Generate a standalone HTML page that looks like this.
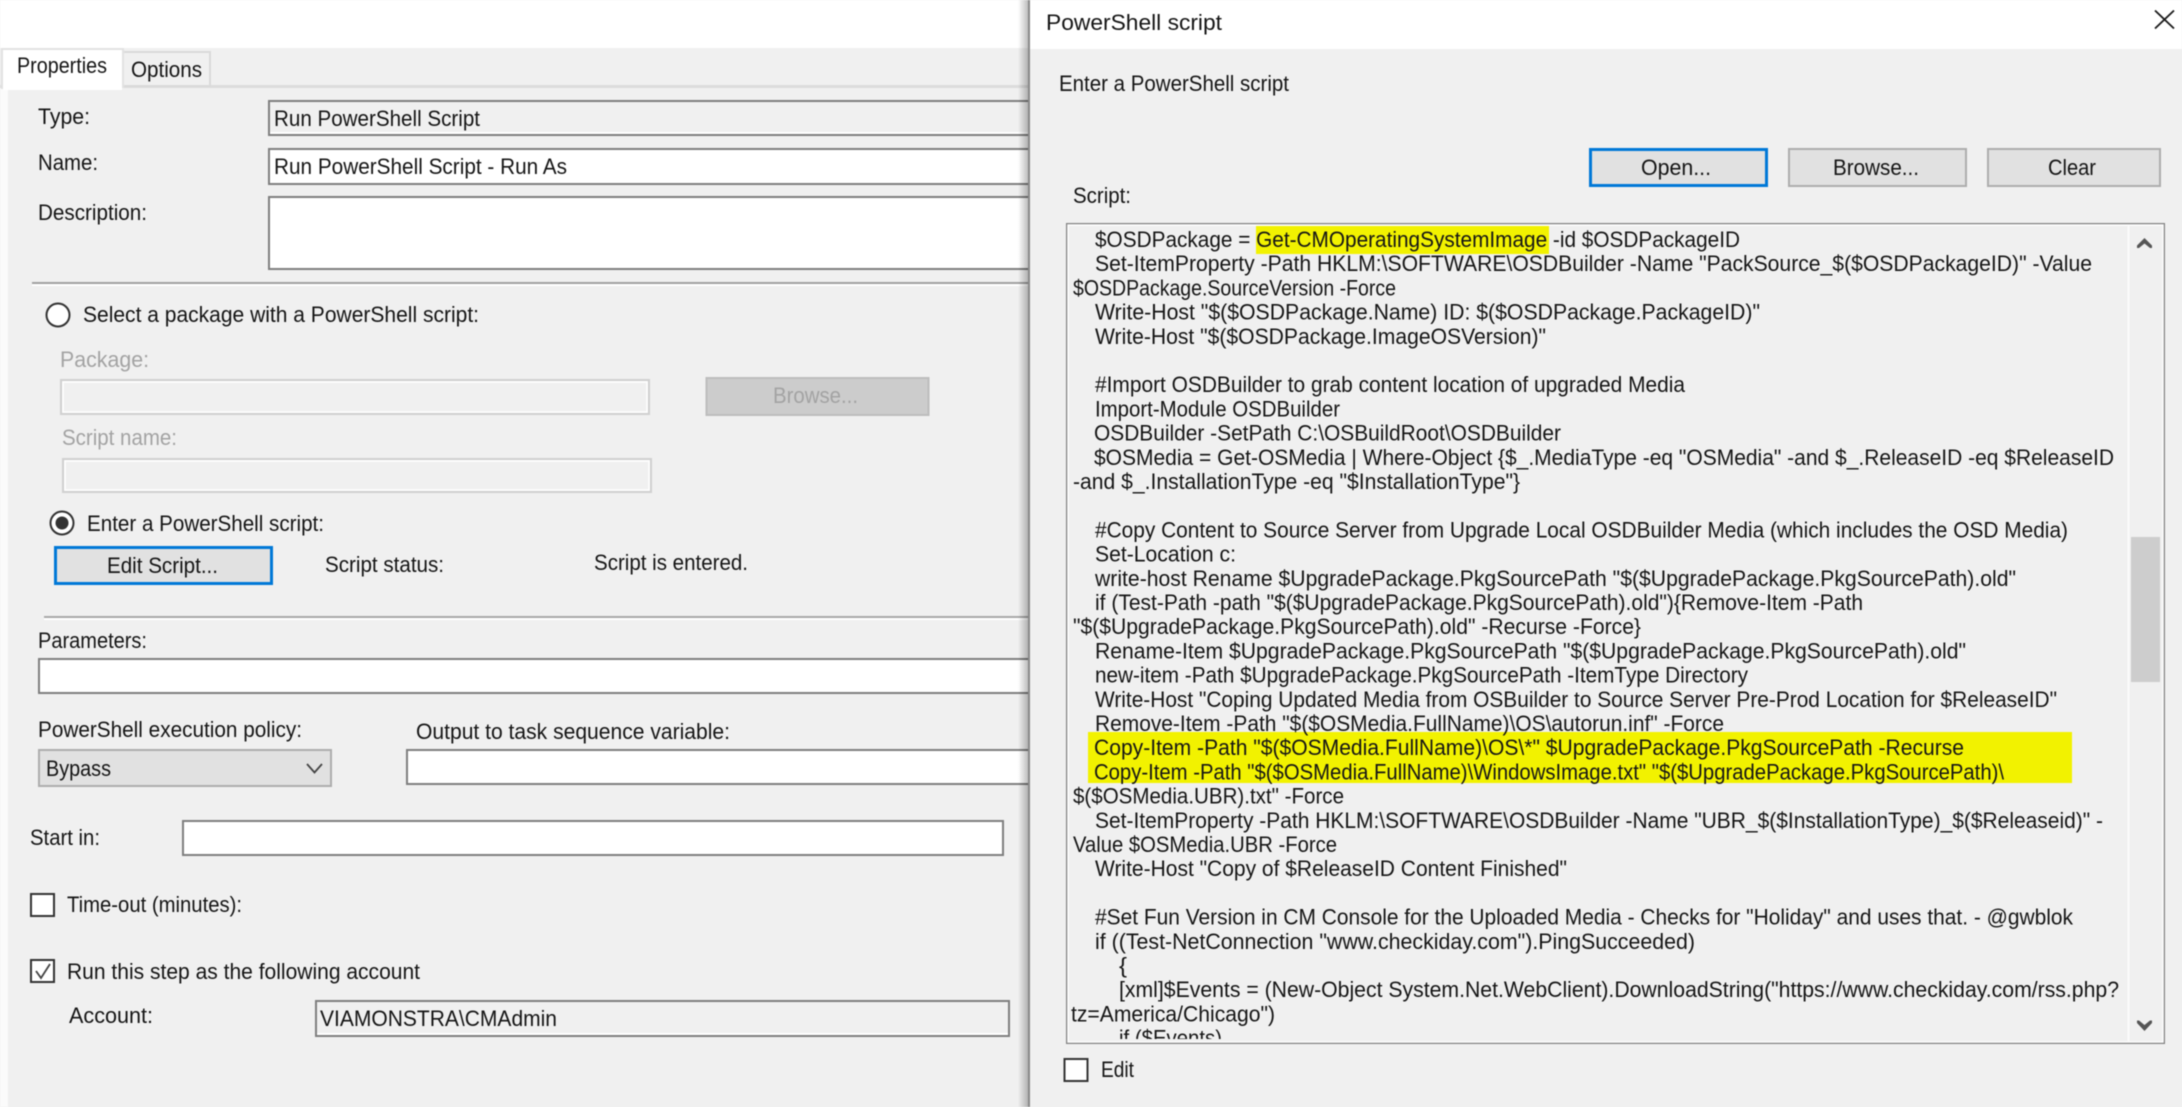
<!DOCTYPE html>
<html><head><meta charset="utf-8"><style>
html,body{margin:0;padding:0;background:#f0f0f0;overflow:hidden}
svg{display:block;width:2182px;height:1107px;filter:blur(.5px)}
text{font-family:"Liberation Sans",sans-serif;font-size:22px;fill:#151515;white-space:pre}
.d{fill:#a3a3a3}
</style></head><body>
<svg xmlns="http://www.w3.org/2000/svg" width="2182" height="1107" viewBox="0 0 2182 1107">
<defs>
<clipPath id="bx"><rect x="1069" y="226" width="1059" height="813"/></clipPath>
<linearGradient id="sh" x1="0" x2="1" y1="0" y2="0"><stop offset="0" stop-color="#000" stop-opacity="0"/><stop offset="1" stop-color="#000" stop-opacity=".28"/></linearGradient>
</defs>
<rect width="2182" height="1107" fill="#f0f0f0"/>
<!-- left window -->
<rect x="0" y="0" width="1030" height="48" fill="#fff"/>
<rect x="0" y="88" width="8" height="1019" fill="#fbfbfb"/>
<rect x="0" y="85" width="1030" height="3" fill="#dcdcdc"/>
<rect x="123" y="52" width="87" height="34" fill="#f0f0f0" stroke="#dadada" stroke-width="2"/>
<path d="M2 89V49H123V88" fill="#fff" stroke="#e2e2e2" stroke-width="2"/>
<rect x="3" y="50" width="119" height="40" fill="#fff"/>
<text x="17" y="73" textLength="90" lengthAdjust="spacingAndGlyphs">Properties</text>
<text x="131" y="77" textLength="71" lengthAdjust="spacingAndGlyphs">Options</text>

<text x="38" y="124" textLength="52" lengthAdjust="spacingAndGlyphs">Type:</text>
<rect x="269" y="101" width="770" height="34" fill="#f0f0f0" stroke="#7f7f7f" stroke-width="2"/>
<rect x="270" y="132" width="770" height="2" fill="#fff"/>
<text x="274" y="126" textLength="206" lengthAdjust="spacingAndGlyphs">Run PowerShell Script</text>
<text x="38" y="170" textLength="60" lengthAdjust="spacingAndGlyphs">Name:</text>
<rect x="269" y="149" width="770" height="35" fill="#fff" stroke="#7f7f7f" stroke-width="2"/>
<text x="274" y="174" textLength="293" lengthAdjust="spacingAndGlyphs">Run PowerShell Script - Run As</text>
<text x="38" y="220" textLength="109" lengthAdjust="spacingAndGlyphs">Description:</text>
<rect x="269" y="197" width="770" height="72" fill="#fff" stroke="#7f7f7f" stroke-width="2"/>
<rect x="32" y="282" width="1000" height="2" fill="#a0a0a0"/><rect x="32" y="284" width="1000" height="2" fill="#fff"/>

<circle cx="58" cy="315" r="11.500" fill="#fff" stroke="#333" stroke-width="2"/>
<text x="83" y="322" textLength="396" lengthAdjust="spacingAndGlyphs">Select a package with a PowerShell script:</text>
<text class="d" x="60" y="367" textLength="89" lengthAdjust="spacingAndGlyphs">Package:</text>
<rect x="61" y="380" width="588" height="34" fill="#f0f0f0" stroke="#d0d0d0" stroke-width="2"/>
<rect x="63" y="382" width="584" height="30" fill="none" stroke="#fff" stroke-width="1.500"/>
<rect x="706.500" y="378" width="222" height="37" fill="#cccccc" stroke="#bdbdbd" stroke-width="2"/>
<text class="d" x="773" y="403" textLength="85" lengthAdjust="spacingAndGlyphs">Browse...</text>
<text class="d" x="62" y="445" textLength="115" lengthAdjust="spacingAndGlyphs">Script name:</text>
<rect x="63" y="459" width="588" height="33" fill="#f0f0f0" stroke="#d0d0d0" stroke-width="2"/>
<rect x="65" y="461" width="584" height="29" fill="none" stroke="#fff" stroke-width="1.500"/>

<circle cx="62" cy="523" r="11.500" fill="#fff" stroke="#333" stroke-width="2"/>
<circle cx="62" cy="523" r="6.500" fill="#333"/>
<text x="87" y="531" textLength="237" lengthAdjust="spacingAndGlyphs">Enter a PowerShell script:</text>
<rect x="55.500" y="547.500" width="216" height="36" fill="#e1e1e1" stroke="#0078d7" stroke-width="3"/>
<text x="107" y="573" textLength="111" lengthAdjust="spacingAndGlyphs">Edit Script...</text>
<text x="325" y="572" textLength="119" lengthAdjust="spacingAndGlyphs">Script status:</text>
<text x="594" y="570" textLength="154" lengthAdjust="spacingAndGlyphs">Script is entered.</text>
<rect x="44" y="616" width="990" height="2" fill="#a8a8a8"/><rect x="44" y="618" width="990" height="2" fill="#fff"/>

<text x="38" y="648" textLength="109" lengthAdjust="spacingAndGlyphs">Parameters:</text>
<rect x="39" y="659" width="1000" height="34" fill="#fff" stroke="#7f7f7f" stroke-width="2"/>
<text x="38" y="737" textLength="264" lengthAdjust="spacingAndGlyphs">PowerShell execution policy:</text>
<text x="416" y="739" textLength="314" lengthAdjust="spacingAndGlyphs">Output to task sequence variable:</text>
<rect x="39" y="750" width="292" height="36" fill="#e1e1e1" stroke="#adadad" stroke-width="2"/>
<text x="46" y="776" textLength="65" lengthAdjust="spacingAndGlyphs">Bypass</text>
<path d="M307 764l7.500 8.500 7.500-8.500" fill="none" stroke="#444" stroke-width="1.800"/>
<rect x="407" y="750" width="630" height="34" fill="#fff" stroke="#7f7f7f" stroke-width="2"/>
<text x="30" y="845" textLength="70" lengthAdjust="spacingAndGlyphs">Start in:</text>
<rect x="183" y="821" width="820" height="34" fill="#fff" stroke="#7f7f7f" stroke-width="2"/>
<rect x="31" y="894" width="23" height="22" fill="#fff" stroke="#333" stroke-width="2"/>
<text x="67" y="912" textLength="175" lengthAdjust="spacingAndGlyphs">Time-out (minutes):</text>
<rect x="31" y="960" width="23" height="22" fill="#fff" stroke="#333" stroke-width="2"/>
<path d="M36 971l5 7 9-14" fill="none" stroke="#444" stroke-width="1.800"/>
<text x="67" y="979" textLength="353" lengthAdjust="spacingAndGlyphs">Run this step as the following account</text>
<text x="69" y="1023" textLength="84" lengthAdjust="spacingAndGlyphs">Account:</text>
<rect x="316" y="1001" width="693" height="35" fill="#f0f0f0" stroke="#7f7f7f" stroke-width="2"/>
<rect x="317" y="1033" width="691" height="2" fill="#fff"/>
<text x="320" y="1026" textLength="237" lengthAdjust="spacingAndGlyphs">VIAMONSTRA\CMAdmin</text>

<!-- right dialog -->
<rect x="1018" y="0" width="11" height="1107" fill="url(#sh)"/>
<rect x="1028" y="0" width="2" height="1107" fill="#8a8a8a"/>
<rect x="1030" y="0" width="1152" height="1107" fill="#f0f0f0"/>
<rect x="1030" y="0" width="1152" height="49" fill="#fff"/>
<text x="1046" y="30" textLength="176" lengthAdjust="spacingAndGlyphs">PowerShell script</text>
<path d="M2155 10.500l19 18M2174 10.500l-19 18" stroke="#1a1a1a" stroke-width="1.800" fill="none"/>
<text x="1059" y="91" textLength="230" lengthAdjust="spacingAndGlyphs">Enter a PowerShell script</text>
<rect x="1590.500" y="149.500" width="176" height="36" fill="#e1e1e1" stroke="#0078d7" stroke-width="3"/>
<text x="1641" y="175" textLength="70" lengthAdjust="spacingAndGlyphs">Open...</text>
<rect x="1789" y="149" width="177" height="37" fill="#e1e1e1" stroke="#adadad" stroke-width="2"/>
<text x="1833" y="175" textLength="86" lengthAdjust="spacingAndGlyphs">Browse...</text>
<rect x="1988" y="149" width="172" height="37" fill="#e1e1e1" stroke="#adadad" stroke-width="2"/>
<text x="2048" y="175" textLength="48" lengthAdjust="spacingAndGlyphs">Clear</text>
<text x="1073" y="203" textLength="58" lengthAdjust="spacingAndGlyphs">Script:</text>

<rect x="1067" y="224" width="1097" height="819" fill="#f0f0f0" stroke="#808080" stroke-width="2"/>
<rect x="1068" y="225" width="1095" height="817" fill="none" stroke="#fff" stroke-width="1.500"/>
<rect x="1256" y="226" width="293" height="28" fill="#f2f200"/>
<rect x="1088" y="732" width="984" height="51" fill="#f2f200"/>
<g clip-path="url(#bx)">
<text x="1095" y="247" textLength="645" lengthAdjust="spacingAndGlyphs">$OSDPackage = Get-CMOperatingSystemImage -id $OSDPackageID</text>
<text x="1095" y="271.200" textLength="997" lengthAdjust="spacingAndGlyphs">Set-ItemProperty -Path HKLM:\SOFTWARE\OSDBuilder -Name "PackSource_$($OSDPackageID)" -Value</text>
<text x="1073" y="295.400" textLength="323" lengthAdjust="spacingAndGlyphs">$OSDPackage.SourceVersion -Force</text>
<text x="1095" y="319.600" textLength="665" lengthAdjust="spacingAndGlyphs">Write-Host "$($OSDPackage.Name) ID: $($OSDPackage.PackageID)"</text>
<text x="1095" y="343.800" textLength="451" lengthAdjust="spacingAndGlyphs">Write-Host "$($OSDPackage.ImageOSVersion)"</text>
<text x="1095" y="392.200" textLength="590" lengthAdjust="spacingAndGlyphs">#Import OSDBuilder to grab content location of upgraded Media</text>
<text x="1095" y="416.400" textLength="245" lengthAdjust="spacingAndGlyphs">Import-Module OSDBuilder</text>
<text x="1094" y="440.600" textLength="467" lengthAdjust="spacingAndGlyphs">OSDBuilder -SetPath C:\OSBuildRoot\OSDBuilder</text>
<text x="1094" y="464.800" textLength="1020" lengthAdjust="spacingAndGlyphs">$OSMedia = Get-OSMedia | Where-Object {$_.MediaType -eq "OSMedia" -and $_.ReleaseID -eq $ReleaseID</text>
<text x="1073" y="489" textLength="447" lengthAdjust="spacingAndGlyphs">-and $_.InstallationType -eq "$InstallationType"}</text>
<text x="1095" y="537.400" textLength="973" lengthAdjust="spacingAndGlyphs">#Copy Content to Source Server from Upgrade Local OSDBuilder Media (which includes the OSD Media)</text>
<text x="1095" y="561.600" textLength="141" lengthAdjust="spacingAndGlyphs">Set-Location c:</text>
<text x="1095" y="585.800" textLength="921" lengthAdjust="spacingAndGlyphs">write-host Rename $UpgradePackage.PkgSourcePath "$($UpgradePackage.PkgSourcePath).old"</text>
<text x="1095" y="610" textLength="768" lengthAdjust="spacingAndGlyphs">if (Test-Path -path "$($UpgradePackage.PkgSourcePath).old"){Remove-Item -Path</text>
<text x="1073" y="634.200" textLength="568" lengthAdjust="spacingAndGlyphs">"$($UpgradePackage.PkgSourcePath).old" -Recurse -Force}</text>
<text x="1095" y="658.400" textLength="871" lengthAdjust="spacingAndGlyphs">Rename-Item $UpgradePackage.PkgSourcePath "$($UpgradePackage.PkgSourcePath).old"</text>
<text x="1095" y="682.600" textLength="653" lengthAdjust="spacingAndGlyphs">new-item -Path $UpgradePackage.PkgSourcePath -ItemType Directory</text>
<text x="1095" y="706.800" textLength="962" lengthAdjust="spacingAndGlyphs">Write-Host "Coping Updated Media from OSBuilder to Source Server Pre-Prod Location for $ReleaseID"</text>
<text x="1095" y="731" textLength="629" lengthAdjust="spacingAndGlyphs">Remove-Item -Path "$($OSMedia.FullName)\OS\autorun.inf" -Force</text>
<text x="1094" y="755.200" textLength="870" lengthAdjust="spacingAndGlyphs">Copy-Item -Path "$($OSMedia.FullName)\OS\*" $UpgradePackage.PkgSourcePath -Recurse</text>
<text x="1094" y="779.400" textLength="910" lengthAdjust="spacingAndGlyphs">Copy-Item -Path "$($OSMedia.FullName)\WindowsImage.txt" "$($UpgradePackage.PkgSourcePath)\</text>
<text x="1073" y="803.600" textLength="271" lengthAdjust="spacingAndGlyphs">$($OSMedia.UBR).txt" -Force</text>
<text x="1095" y="827.800" textLength="1008" lengthAdjust="spacingAndGlyphs">Set-ItemProperty -Path HKLM:\SOFTWARE\OSDBuilder -Name "UBR_$($InstallationType)_$($Releaseid)" -</text>
<text x="1073" y="852" textLength="264" lengthAdjust="spacingAndGlyphs">Value $OSMedia.UBR -Force</text>
<text x="1095" y="876.200" textLength="472" lengthAdjust="spacingAndGlyphs">Write-Host "Copy of $ReleaseID Content Finished"</text>
<text x="1095" y="924.600" textLength="978" lengthAdjust="spacingAndGlyphs">#Set Fun Version in CM Console for the Uploaded Media - Checks for "Holiday" and uses that. - @gwblok</text>
<text x="1095" y="948.800" textLength="600" lengthAdjust="spacingAndGlyphs">if ((Test-NetConnection "www.checkiday.com").PingSucceeded)</text>
<text x="1119" y="973" textLength="8" lengthAdjust="spacingAndGlyphs">{</text>
<text x="1119" y="997.200" textLength="1000" lengthAdjust="spacingAndGlyphs">[xml]$Events = (New-Object System.Net.WebClient).DownloadString("https://www.checkiday.com/rss.php?</text>
<text x="1071" y="1021.400" textLength="204" lengthAdjust="spacingAndGlyphs">tz=America/Chicago")</text>
<text x="1119" y="1045.600" textLength="103" lengthAdjust="spacingAndGlyphs">if ($Events)</text>
</g>
<rect x="2129" y="226" width="33" height="815" fill="#f0f0f0"/>
<rect x="2127.500" y="226" width="2" height="815" fill="#fbfbfb"/>
<rect x="2131" y="537" width="29" height="145" fill="#cdcdcd"/>
<path d="M2137 248v-2.500l7.500-7.500 7.500 7.500v2.500l-2 0-5.500-4.500-5.500 4.500z" fill="#555"/>
<path d="M2137 1020.500v2.500l7.500 8 7.500-8v-2.500l-2 0-5.500 4.500-5.500-4.500z" fill="#555"/>
<rect x="1064.500" y="1059" width="23" height="22" fill="#fff" stroke="#333" stroke-width="2"/>
<text x="1101" y="1077" textLength="33" lengthAdjust="spacingAndGlyphs">Edit</text>
</svg>
</body></html>
